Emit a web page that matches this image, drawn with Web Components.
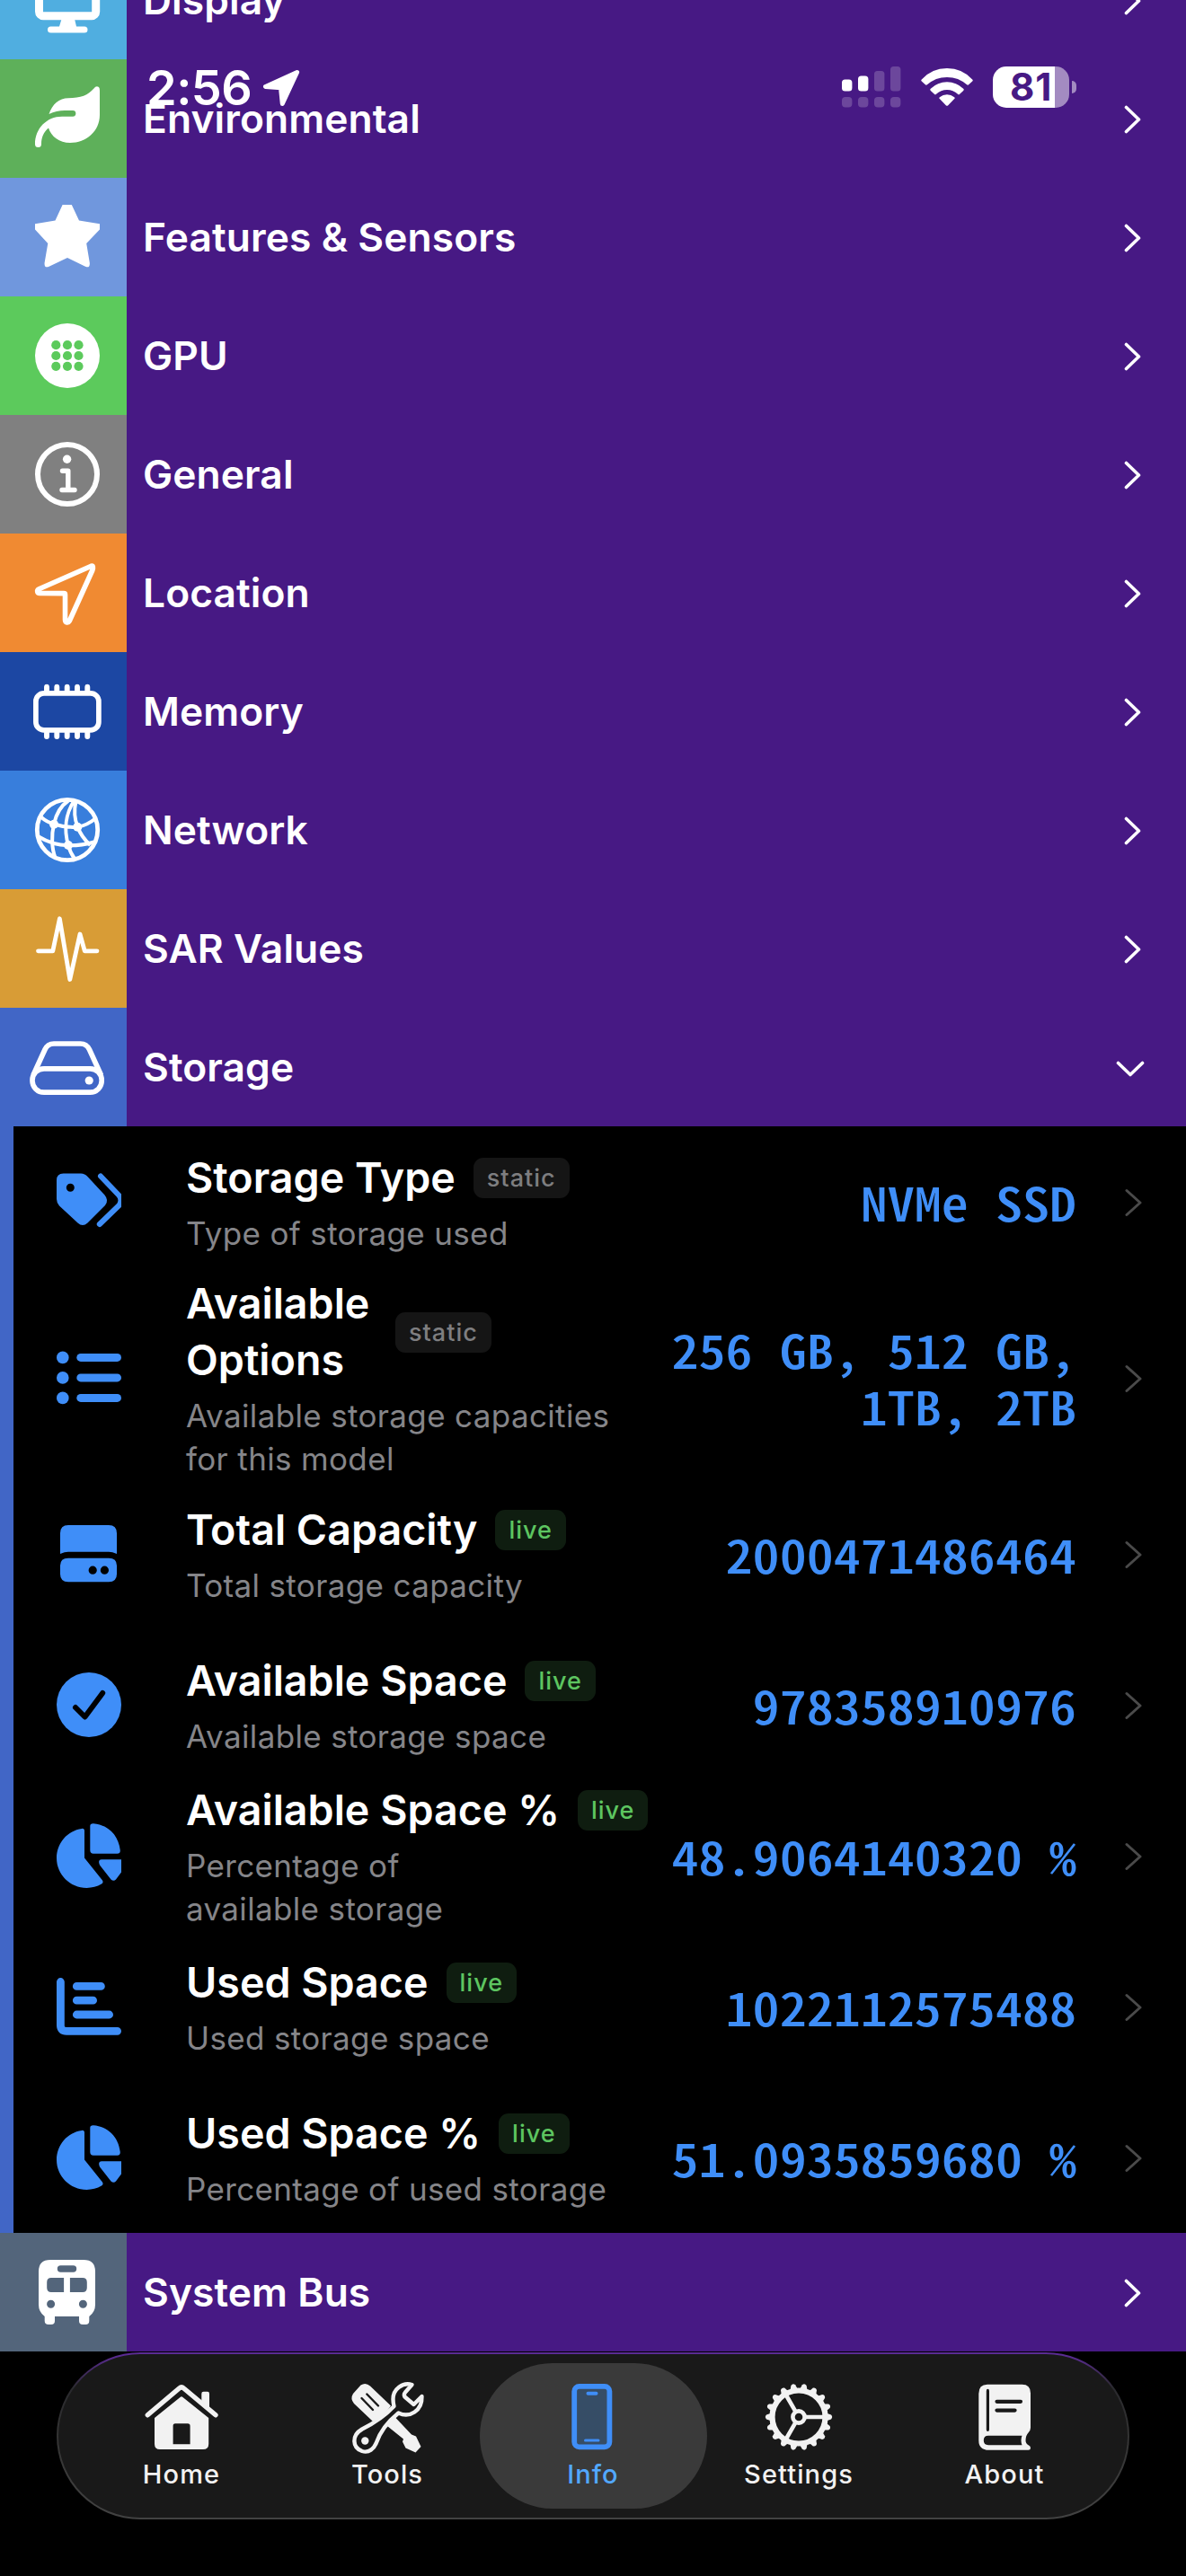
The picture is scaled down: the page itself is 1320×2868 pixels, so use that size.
<!DOCTYPE html>
<html lang="en">
<head>
<meta charset="utf-8">
<title>Device Info</title>
<style>
  html, body {
    margin: 0;
    height: 100%;
    background: #000;
  }

  body {
    font-family: Inter, "Liberation Sans", sans-serif;
    color: #fff;
    overflow: hidden;
  }
</style>
</head>
<body>

<device-screen>
  <status-bar slot="status" time="2:56" battery="81"></status-bar>

  <info-category label="Display" color="#50aee0">
    <svg slot="icon" viewBox="0 0 141 132"><path fill="none" stroke="#fff" stroke-width="9" d="M43.5 40V79a4.7 4.7 0 0 0 4.7 4.7H102a4.7 4.7 0 0 0 4.7-4.7V40"/><path fill="#fff" d="M68.6 87H83L85 95.5H94a3.5 3.5 0 0 1 0 7H56.5a3.5 3.5 0 0 1 0-7H66Z"/></svg>
  </info-category>

  <info-category label="Environmental" color="#5eb05a">
    <svg slot="icon" viewBox="0 0 141 132"><path fill="#fff" d="M54.5 61C58 50 66 43.2 76 43.2C90 43.2 98 40 104.5 32.5Q107 29 110 31Q111 32 111 35V62C111 80 96 93 78 93C66 93 57 86 54 76.5C48.5 81 46 87 46 94.5A3.4 3.4 0 0 1 39 94.5C39 77 52 63.7 69 63.7H81A3.35 3.35 0 0 0 81 57H72C66 57 60 58.5 54.5 61Z"/></svg>
  </info-category>

  <info-category label="Features &amp; Sensors" color="#7097dd">
    <svg slot="icon" viewBox="0 0 141 132"><path fill="#fff" d="M69.6 30H79.8L88 47.5L111 51.2V57.5L96.2 73L99.8 94.5Q100.4 101 95 98.8L75 89L54.5 98.8Q49 101 49.6 94.5L53.3 73L39 57.5V51.2L61.5 47.5Z"/></svg>
  </info-category>

  <info-category label="GPU" color="#5cca5c">
    <svg slot="icon" viewBox="0 0 141 132"><circle cx="75" cy="66" r="36" fill="#fff"/><g fill="#5cca5c"><circle cx="62.3" cy="54.2" r="5.1"/><circle cx="75" cy="54.2" r="5.1"/><circle cx="87.5" cy="54.2" r="5.1"/><circle cx="62.3" cy="66" r="5.1"/><circle cx="75" cy="66" r="5.1"/><circle cx="87.5" cy="66" r="5.1"/><circle cx="62.3" cy="77.8" r="5.1"/><circle cx="75" cy="77.8" r="5.1"/><circle cx="87.5" cy="77.8" r="5.1"/></g></svg>
  </info-category>

  <info-category label="General" color="#808080">
    <svg slot="icon" viewBox="0 0 141 132"><g fill="none" stroke="#fff" stroke-linecap="round" stroke-linejoin="round"><circle cx="75" cy="66" r="33" stroke-width="6"/><path stroke-width="5.4" d="M69.5 62.3H75.8V83.5M69 83.5H83"/></g><circle cx="74.6" cy="49.3" r="4.7" fill="#fff"/></svg>
  </info-category>

  <info-category label="Location" color="#f08a32">
    <svg slot="icon" viewBox="0 0 141 132"><path fill="none" stroke="#fff" stroke-width="5.6" stroke-linejoin="round" d="M101.5 36.2L43.5 61.8C40.5 63.2 41.5 66.4 44 66.4L71 66.6Q72.5 66.6 72.5 68V96C72.5 99.5 76 99.8 77.2 97.5L102.8 41C104 37.5 103.5 35.5 101.5 36.2Z"/></svg>
  </info-category>

  <info-category label="Memory" color="#1c47a3">
    <svg slot="icon" viewBox="0 0 141 132"><rect x="39.9" y="45.9" width="70" height="41" rx="9" fill="none" stroke="#fff" stroke-width="5.7"/><path stroke="#fff" stroke-width="5.9" stroke-linecap="round" d="M52 38.8V43M63.3 38.8V43M74.7 38.8V43M86 38.8V43M97.3 38.8V43M52 90V94M63.3 90V94M74.7 90V94M86 90V94M97.3 90V94"/></svg>
  </info-category>

  <info-category label="Network" color="#387edc">
    <svg slot="icon" viewBox="0 0 141 132"><g fill="none" stroke="#fff" stroke-width="4"><circle cx="75" cy="66" r="33.7" stroke-width="4.8"/><path d="M76 33.5C68 39 62.5 48 60 59.5C57 72 57.5 87 61.5 97M82.5 33.5C73 48 71 66 76 83C77.5 89 80 94 83 98M84.5 33.5C82.5 43 82.5 53 86.3 62C89 70 94 77 100.5 83M45.5 51.5C49.5 55 54.5 58 60 59.5C69 62.5 78 63.5 86.3 62.8C93.5 61.5 100.5 58 106 53.5M43 73.5C52 79 64 83 76 83.3C86.5 83.5 96 82 104.5 79.5"/></g><g fill="#fff"><circle cx="60" cy="59.8" r="5"/><circle cx="86.3" cy="62.8" r="5"/><circle cx="76" cy="83" r="5"/></g></svg>
  </info-category>

  <info-category label="SAR Values" color="#d89c36">
    <svg slot="icon" viewBox="0 0 141 132"><path fill="none" stroke="#fff" stroke-width="4.8" stroke-linecap="round" stroke-linejoin="round" d="M42.5 68.8H58.8L66.4 32.8L77.8 100.5L89 50L94.3 68.8H108"/></svg>
  </info-category>

  <info-category label="Storage" color="#4166c6" open>
    <svg slot="icon" viewBox="0 0 141 132"><g fill="none" stroke="#fff" stroke-width="5.7"><rect x="36" y="67.8" width="77.2" height="26.4" rx="13"/><path d="M37 75L50 46.5Q53 40 60 40H89.5Q96.5 40 99.5 46.5L112.5 75"/></g><circle cx="99.2" cy="81" r="4.6" fill="#fff"/></svg>

    <info-row value="NVMe SSD">
      <svg slot="icon" viewBox="0 0 72 72"><path fill="#3f8ef8" fill-rule="evenodd" d="M7.5 4.5H27Q31.5 4.5 34.5 8L53.5 28.5Q58.5 34.5 54 40L34.5 59.5Q29 64.5 23.5 59.5L3 40.5Q0 37 0 33V12Q0 4.5 7.5 4.5ZM15.3 15.7A4.5 4.5 0 1 0 15.3 24.7A4.5 4.5 0 1 0 15.3 15.7Z"/><path fill="none" stroke="#3f8ef8" stroke-width="6" stroke-linecap="round" stroke-linejoin="round" d="M49 7.5L69.5 29Q73.5 34.5 69.5 40L47.8 61"/></svg>
      Storage Type
      <level-badge slot="badge" kind="static"></level-badge>
      <span slot="detail">Type of storage used</span>
    </info-row>

    <info-row value="256 GB, 512 GB, 1TB, 2TB" tall>
      <svg slot="icon" viewBox="0 0 72 72"><g fill="#3f8ef8"><circle cx="6.8" cy="13.4" r="6.8"/><circle cx="6.8" cy="35.9" r="6.8"/><circle cx="6.8" cy="58.4" r="6.8"/><rect x="22.3" y="8.9" width="49.7" height="9" rx="4.5"/><rect x="22.3" y="31.4" width="49.7" height="9" rx="4.5"/><rect x="22.3" y="53.9" width="49.7" height="9" rx="4.5"/></g></svg>
      Available Options
      <level-badge slot="badge" kind="static"></level-badge>
      <span slot="detail">Available storage capacities<br>for this model</span>
    </info-row>

    <info-row value="2000471486464">
      <svg slot="icon" viewBox="0 0 72 72"><path fill="#3f8ef8" fill-rule="evenodd" d="M13 4H58Q67 4 67 13V36Q62 33.8 58 33.8H13Q9 33.8 4 36V13Q4 4 13 4ZM13 40.7H58Q67 40.7 67 49V58.5Q67 67.2 58 67.2H13Q4 67.2 4 58.5V49Q4 40.7 13 40.7ZM40.2 49.6A4.6 4.6 0 1 0 40.2 58.8A4.6 4.6 0 1 0 40.2 49.6ZM53.4 49.6A4.6 4.6 0 1 0 53.4 58.8A4.6 4.6 0 1 0 53.4 49.6Z"/></svg>
      Total Capacity
      <level-badge slot="badge" kind="live"></level-badge>
      <span slot="detail">Total storage capacity</span>
    </info-row>

    <info-row value="978358910976">
      <svg slot="icon" viewBox="0 0 72 72"><circle cx="36" cy="36" r="36" fill="#3f8ef8"/><path fill="none" stroke="#000" stroke-width="6" stroke-linecap="round" stroke-linejoin="round" d="M21 39L31.5 49.5L51.2 23"/></svg>
      Available Space
      <level-badge slot="badge" kind="live"></level-badge>
      <span slot="detail">Available storage space</span>
    </info-row>

    <info-row value="48.9064140320 %">
      <svg slot="icon" viewBox="0 0 72 72"><path fill="#3f8ef8" d="M28 5.9Q31 5.5 31 8.5V38.5L51 63.5Q52.5 66 50 67.6C45 70.5 39.5 72 33.5 72C15 72 0 57 0 38.8C0 22 12 8 28 5.9ZM37.3 3Q37.3 0 41 .2C57 1.5 69 13 70.8 30Q71 33.7 67.5 33.7H41Q37.3 33.7 37.3 30ZM50 40.3H72V54.5L66 62.5Q63.5 65 60.5 62.5L48 46.5Q45.5 40.8 50 40.3Z"/></svg>
      Available Space %
      <level-badge slot="badge" kind="live"></level-badge>
      <span slot="detail">Percentage of<br>available storage</span>
    </info-row>

    <info-row value="1022112575488">
      <svg slot="icon" viewBox="0 0 72 72"><g fill="none" stroke="#3f8ef8" stroke-width="8.8" stroke-linecap="round"><path d="M4.4 8.5V57Q4.4 63.3 11 63.3H67.6M22.3 13.4H49.4M22.3 29.2H40.6M22.3 45H58.6"/></g></svg>
      Used Space
      <level-badge slot="badge" kind="live"></level-badge>
      <span slot="detail">Used storage space</span>
    </info-row>

    <info-row value="51.0935859680 %">
      <svg slot="icon" viewBox="0 0 72 72"><path fill="#3f8ef8" d="M28 5.9Q31 5.5 31 8.5V38.5L51 63.5Q52.5 66 50 67.6C45 70.5 39.5 72 33.5 72C15 72 0 57 0 38.8C0 22 12 8 28 5.9ZM37.3 3Q37.3 0 41 .2C57 1.5 69 13 70.8 30Q71 33.7 67.5 33.7H41Q37.3 33.7 37.3 30ZM50 40.3H72V54.5L66 62.5Q63.5 65 60.5 62.5L48 46.5Q45.5 40.8 50 40.3Z"/></svg>
      Used Space %
      <level-badge slot="badge" kind="live"></level-badge>
      <span slot="detail">Percentage of used storage</span>
    </info-row>
  </info-category>

  <info-category label="System Bus" color="#53657b">
    <svg slot="icon" viewBox="0 0 141 132"><path fill="#fff" fill-rule="evenodd" d="M56 30H93Q106 30 106 43V80Q106 88 99.3 93V98Q99.3 102 95.3 102H92Q88 102 88 98V93H61V98Q61 102 57 102H54Q49.7 102 49.7 98V93Q43 88 43 80V43Q43 30 56 30ZM67.5 36.3A3.7 3.7 0 0 0 67.5 43.7H81.5A3.7 3.7 0 0 0 81.5 36.3ZM57 50Q52.2 50 52.2 55V61Q52.2 66 57 66H71.1V50ZM77.9 50V66H92Q96.8 66 96.8 61V55Q96.8 50 92 50ZM56.6 74.8A4.5 4.5 0 1 0 56.6 83.8A4.5 4.5 0 1 0 56.6 74.8ZM92.4 74.8A4.5 4.5 0 1 0 92.4 83.8A4.5 4.5 0 1 0 92.4 74.8Z"/></svg>
  </info-category>

  <tab-bar slot="tabs">
    <tab-item label="Home">
      <svg viewBox="0 0 100 100"><path fill="none" stroke="#f2f2f2" stroke-width="5.4" stroke-linecap="round" stroke-linejoin="round" d="M12.3 47.8L47.5 18Q50 15.8 52.5 18L88 47.8"/><path fill="#f2f2f2" fill-rule="evenodd" d="M72.3 32V24Q72.3 21.7 74.5 21.7H79Q81 21.7 81 24V40ZM48.5 28Q50 26.5 51.5 28L80.2 51V80Q80.2 86 74 86H26Q20 86 20 80V51ZM43 57.3Q40.6 57.3 40.6 60V80.3H59.6V60Q59.6 57.3 57 57.3Z"/></svg>
    </tab-item>
    <tab-item label="Tools">
      <svg viewBox="0 0 100 100"><path fill="#f2f2f2" d="M20.5 14.5Q26 11 31 15.5L54 37.5Q48 47 34.6 55.5L13 35Q8.5 29.5 12 24ZM53.5 55.5L59 50.5L77 69.5L82 71.5L87.5 83L81.5 89.5L70.5 84.5L67 77.5L68 74.5L50 60Z"/><path stroke="#191919" stroke-width="2.4" stroke-linecap="round" d="M21.5 29L34 42M27.3 24.5L40 37.5"/><path fill="#191919" stroke="#f2f2f2" stroke-width="4.4" stroke-linejoin="round" d="M77.5 14C67 11 56.5 19 56.5 30Q56.5 34 57.5 38C50 46 39 55 22 63.5C10 70.5 11 84 22 88C30 90.5 35 85 37.5 79.5C42 66 52 54 62.5 45.5C75 51.5 89 43 88.5 27L79.5 36L69.5 27.5Q68 25 70 22.5Z"/><circle cx="25.3" cy="76.5" r="4.2" fill="#f2f2f2"/></svg>
    </tab-item>
    <tab-item label="Info" active>
      <svg viewBox="0 0 100 100"><rect x="29.2" y="15.9" width="39.2" height="67.4" rx="5.5" fill="#364d66" stroke="#3f8ef8" stroke-width="5.8"/><path stroke="#3f8ef8" stroke-width="4" stroke-linecap="round" d="M44.5 23.8H53.5"/><path stroke="#3f8ef8" stroke-width="3" stroke-linecap="round" d="M41.5 76H56"/></svg>
    </tab-item>
    <tab-item label="Settings">
      <svg viewBox="0 0 100 100"><g fill="none" stroke="#f2f2f2"><circle cx="50" cy="50" r="29.5" stroke-width="6.2"/><circle cx="50" cy="50" r="6.6" stroke-width="4.6"/><path stroke-width="4.6" d="M58 50H80M46 43.1L35 24M46 56.9L35 76"/></g><g id="teeth" fill="#f2f2f2"></g></svg>
    </tab-item>
    <tab-item label="About">
      <svg viewBox="0 0 100 100"><path fill="#f2f2f2" fill-rule="evenodd" d="M31 13.8H69.5Q79 13.8 79 23.5V62Q79 65 76.5 67.5Q73.5 70.5 73.5 76Q73.5 79.5 77 81.5Q79 82.5 79 84.5Q79 86.8 76.5 86.8H32.5Q21.3 86.8 21.3 76V24Q21.3 13.8 31 13.8ZM31.4 18.8Q29.8 18.8 29.8 21V64Q29.8 66 31.4 66Q33 66 33 64V21Q33 18.8 31.4 18.8ZM41.5 30.7A2.1 2.1 0 0 0 41.5 34.9H68A2.1 2.1 0 0 0 68 30.7ZM41.5 40.4A2.1 2.1 0 0 0 41.5 44.7H61.5A2.1 2.1 0 0 0 61.5 40.4ZM32 70.8Q26.8 70.8 26.8 76Q26.8 81.2 32 81.2H69.5Q67.5 76 69.5 70.8Z"/></svg>
    </tab-item>
  </tab-bar>
</device-screen>

<script>
const define = (name, html, ready) => {
  const template = document.createElement('template')
  template.innerHTML = html
  window.customElements.define(name, class extends HTMLElement {
    constructor() {
      super()
      this.attachShadow({ mode: "open" }).append(template.content.cloneNode(true))
    }

    connectedCallback() {
      if (ready) ready(this, (selector) => this.shadowRoot.querySelector(selector))
    }
  })
}

define('device-screen', `
  <style>
    :host {
      display: block;
      position: relative;
      width: 1320px;
      height: 2868px;
      overflow: hidden;
      background: #000;
    }

    main {
      margin-top: -66px;
    }

    /* the status bar floats over the scrolled list */
    ::slotted(status-bar) {
      position: absolute;
      top: 0;
      left: 0;
      right: 0;
    }
  </style>
  <slot name="status"></slot>
  <main><slot></slot></main>
  <slot name="tabs"></slot>
`)

define('status-bar', `
  <style>
    :host {
      display: flex;
      align-items: center;
      box-sizing: border-box;
      height: 194px;
      padding: 0 122px 0 163px;
    }

    #time {
      font-size: 54px;
      font-weight: 580;
      letter-spacing: -.5px;
      line-height: 60px;
      margin-top: 2px;
    }

    .arrow {
      width: 42px;
      height: 42px;
      margin-left: 12px;
      margin-top: 2px;
    }

    .signal {
      width: 66px;
      height: 46px;
      margin-left: auto;
    }

    .wifi {
      width: 58px;
      height: 42px;
      margin: 0 22px;
    }

    .cell {
      width: 85px;
      height: 46px;
      border-radius: 15px;
      background: linear-gradient(90deg, #fff 69px, #a38bc1 69px);
      color: #471984;
      font-size: 42px;
      font-weight: 700;
      line-height: 46px;
      letter-spacing: 1px;
      text-indent: 19px;
    }

    .nub {
      width: 5px;
      height: 14px;
      margin-left: 3px;
      border-radius: 0 5px 5px 0;
      background: #a38bc1;
    }
  </style>
  <span id="time"></span>
  <svg class="arrow" viewBox="0 0 42 42"><path fill="#fff" stroke="#fff" stroke-width="5" stroke-linejoin="round" d="M38.6 3.5L3.5 19.5L20.5 20.8L22.3 38.5Z"/></svg>
  <svg class="signal" viewBox="0 0 66 46"><g fill="#fff"><rect y="14.5" width="11.4" height="13" rx="3.5"/><rect x="18" y="10.5" width="11.4" height="17" rx="3.5"/></g><g fill="#fff" opacity=".2"><rect x="36" y="5" width="11.4" height="22.5" rx="3.5"/><rect x="54" width="11.4" height="27.5" rx="3.5"/><rect y="34" width="11.4" height="11.4" rx="4"/><rect x="18" y="34" width="11.4" height="11.4" rx="4"/><rect x="36" y="34" width="11.4" height="11.4" rx="4"/><rect x="54" y="34" width="11.4" height="11.4" rx="4"/></g></svg>
  <svg class="wifi" viewBox="0 0 58 42"><path fill="#fff" d="M.8 12.5Q-.3 13.6 .8 14.6L4.9 18.3Q5.9 19.2 6.9 18.3Q16 9.9 29 9.9T51.1 18.3Q52.1 19.2 53.1 18.3L57.2 14.6Q58.3 13.6 57.2 12.5Q46 0 29 0T.8 12.5ZM10.8 22.8Q9.7 23.8 10.8 24.9L14.9 28.7Q15.9 29.7 17 28.7Q22 24 29 24T41 28.7Q42.1 29.7 43.1 28.7L47.2 24.9Q48.3 23.8 47.2 22.8Q39.5 15.3 29 15.3T10.8 22.8ZM20.8 32.2Q19.8 33.1 20.8 34.1L28 41.4Q29 42.3 30 41.4L37.2 34.1Q38.2 33.1 37.2 32.2Q33.5 29.3 29 29.3T20.8 32.2Z"/></svg>
  <span class="cell"></span>
  <span class="nub"></span>
`, (el, $) => {
  $('#time').textContent = el.getAttribute('time')
  $('.cell').textContent = el.getAttribute('battery')
})

define('info-category', `
  <style>
    :host {
      display: block;
    }

    header {
      display: flex;
      align-items: center;
      height: 132px;
      padding-right: 46px;
      background: linear-gradient(90deg, var(--color) 141px, #471984 141px);
    }

    ::slotted([slot=icon]) {
      width: 141px;
      height: 132px;
      flex: none;
    }

    #label {
      flex: 1;
      margin-left: 18px;
      font-size: 44.3px;
      font-weight: 570;
      letter-spacing: .1px;
      white-space: nowrap;
    }

    .chevron {
      width: 32px;
      height: 32px;
      margin-top: 1px;
      fill: none;
      stroke: #fff;
      stroke-width: 3.6px;
      stroke-linecap: round;
      stroke-linejoin: round;
    }

    .down {
      display: none;
    }

    :host([open]) .right {
      display: none;
    }

    :host([open]) .down {
      display: block;
      margin-top: 3px;
    }

    .rows {
      display: none;
    }

    :host([open]) .rows {
      display: block;
      border-left: 15px solid var(--color);
      background: #000;
    }
  </style>
  <header>
    <slot name="icon"></slot>
    <span id="label"></span>
    <svg class="chevron right" viewBox="0 0 32 32"><path d="M11.5 2.5L25.5 16L11.5 29.5"/></svg>
    <svg class="chevron down" viewBox="0 0 32 32"><path d="M2.5 9.5L16 22.5L29.5 9.5"/></svg>
  </header>
  <div class="rows"><slot></slot></div>
`, (el, $) => {
  el.style.setProperty('--color', el.getAttribute('color'))
  $('#label').textContent = el.getAttribute('label')
})

define('info-row', `
  <style>
    :host {
      display: flex;
      align-items: center;
      height: 168px;
      padding: 0 48px;
    }

    :host([tall]) {
      height: 224px;
    }

    ::slotted([slot=icon]) {
      width: 72px;
      height: 72px;
      flex: none;
    }

    .text {
      display: flex;
      flex-direction: column;
      gap: 6px;
      width: 512px;
      margin-left: 72px;
      flex: none;
    }

    .heading {
      display: flex;
      align-items: center;
      gap: 20px;
    }

    .title {
      font-size: 46.6px;
      font-weight: 570;
      line-height: 63px;
      white-space: nowrap;
    }

    :host([tall]) .title {
      width: 213px;
      white-space: normal;
    }

    .detail {
      color: #858589;
      font-size: 35px;
      letter-spacing: .35px;
      line-height: 48px;
      white-space: nowrap;
    }

    /* half-width Latin forms, widened to a 30px advance */
    #value {
      width: 398px;
      margin: -2px 0 0 auto;
      text-align: right;
      color: #3f8ef8;
      font: 500 52px/63px "Noto Sans CJK SC", monospace;
      font-feature-settings: "hwid";
      transform: scaleX(1.155);
      transform-origin: right;
    }

    .chevron {
      width: 20px;
      height: 32px;
      margin: 1px 0 0 54px;
      flex: none;
    }
  </style>
  <slot name="icon"></slot>
  <div class="text">
    <div class="heading">
      <span class="title"><slot></slot></span>
      <slot name="badge"></slot>
    </div>
    <div class="detail"><slot name="detail"></slot></div>
  </div>
  <span id="value"></span>
  <svg class="chevron" viewBox="0 0 20 32"><path fill="none" stroke="#4a4a4a" stroke-width="3" stroke-linecap="round" stroke-linejoin="round" d="M2 2.5L17 16L2 29.5"/></svg>
`, (el, $) => {
  $('#value').textContent = el.getAttribute('value')
})

define('level-badge', `
  <style>
    :host {
      display: block;
      box-sizing: border-box;
      height: 45px;
      padding: 0 15px;
      border-radius: 11px;
      background: #151515;
      color: #7e7e80;
      font-size: 27px;
      font-weight: 450;
      letter-spacing: 1px;
      line-height: 45px;
    }

    :host([kind=live]) {
      background: #0f1d10;
      color: #5dc560;
    }
  </style>
  <span id="kind"></span>
`, (el, $) => {
  $('#kind').textContent = el.getAttribute('kind')
})

define('tab-bar', `
  <style>
    :host {
      display: flex;
      justify-content: center;
      align-items: center;
      box-sizing: border-box;
      height: 186px;
      margin: 1px 63px 0;
      border: 2px solid transparent;
      border-radius: 93px;
      background:
        linear-gradient(#191919, #191919) padding-box,
        linear-gradient(#5b2b95, #5b2b95 2px, #2a2a2e 40px, #333 50%, #424242) border-box;
    }
  </style>
  <slot></slot>
`)

define('tab-item', `
  <style>
    :host {
      display: flex;
      flex-direction: column;
      align-items: center;
      box-sizing: border-box;
      width: 253px;
      height: 162px;
      margin: 0 -12px;
      padding-top: 10px;
      border-radius: 81px;
      color: #f2f2f2;
      font-size: 29px;
      font-weight: 500;
      letter-spacing: 1.1px;
      line-height: 30px;
    }

    :host([active]) {
      background: #3a3a3a;
      color: #52a8ff;
    }

    ::slotted(svg) {
      width: 100px;
      height: 100px;
    }

    #label {
      margin-top: -1px;
    }
  </style>
  <slot></slot>
  <span id="label"></span>
`, (el, $) => {
  $('#label').textContent = el.getAttribute('label')
})

// eighteen teeth around the gear's rim
const teeth = document.querySelector('#teeth')
for (let i = 0; i < 18; i++) {
  const tooth = document.createElementNS('http://www.w3.org/2000/svg', 'path')
  tooth.setAttribute('d', 'M81 45.8L86 47.6Q88.4 50 86 52.4L81 54.2Z')
  tooth.setAttribute('transform', `rotate(${i * 20} 50 50)`)
  teeth.append(tooth)
}
</script>
</body>
</html>
